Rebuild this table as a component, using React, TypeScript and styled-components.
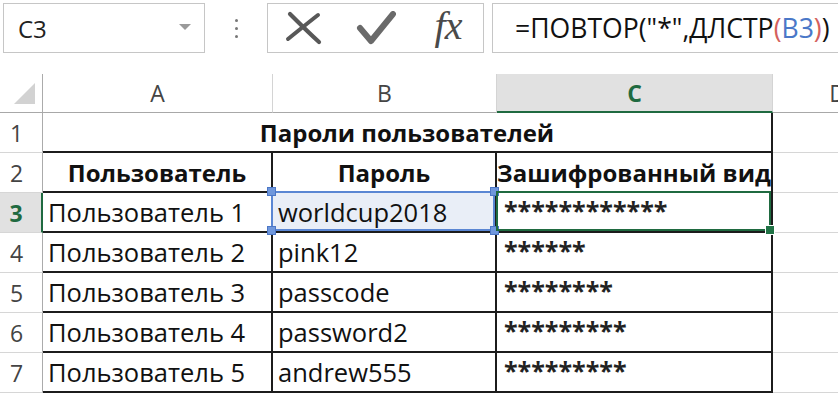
import React from 'react'
import styled, { createGlobalStyle } from 'styled-components'

const GREEN = '#1f6a40'
const DARK = '2px solid #1c1c1c'
const LIGHT = '1px solid #d6d6d6'

const GlobalStyle = createGlobalStyle`
  html, body {
    margin: 0;
    padding: 0;
    background: #fff;
    overflow: hidden;
  }
  body {
    font-family: "Open Sans", "Noto Sans", sans-serif;
    color: #111;
  }
`

const Window = styled.div`
  width: 838px;
  height: 394px;
  overflow: hidden;
`

/* ---------- formula bar ---------- */

const FormulaBar = styled.div`
  display: flex;
  align-items: stretch;
  height: 50px;
  padding: 3px 0 0 3px;
  & > * {
    flex-shrink: 0;
  }
`

const NameBox = styled.div`
  width: 202px;
  box-sizing: border-box;
  border: 1px solid #c6c6c6;
  display: flex;
  align-items: center;
  justify-content: space-between;
  padding: 0 13px 0 14px;
  font-size: 24px;
  color: #222;
`

const DropArrow = styled.span`
  width: 0;
  height: 0;
  border-left: 6px solid transparent;
  border-right: 6px solid transparent;
  border-top: 6px solid #9a9a9a;
  margin-top: -3px;
`

const Grip = styled.div`
  width: 62px;
  display: flex;
  flex-direction: column;
  align-items: center;
  justify-content: center;
  gap: 5px;
  span {
    width: 3px;
    height: 3px;
    border-radius: 50%;
    background: #777;
  }
`

const ButtonBox = styled.div`
  width: 217px;
  box-sizing: border-box;
  border: 1px solid #c6c6c6;
  display: grid;
  grid-template-columns: 72px 72px 72px;
  align-items: center;
  justify-items: center;
`

const FxLabel = styled.span`
  font-family: "Liberation Serif", "DejaVu Serif", serif;
  font-style: italic;
  font-size: 40px;
  color: #4a4a4a;
  letter-spacing: -1px;
  margin-top: -6px;
`

const FormulaInput = styled.div`
  width: 400px;
  margin-left: 8px;
  box-sizing: border-box;
  border: 1px solid #c6c6c6;
  display: flex;
  align-items: center;
  padding-left: 22px;
  font-size: 26.6px;
  color: #111;
  white-space: nowrap;
`

const Tok = styled.span<{ $c: string }>`
  color: ${p => p.$c};
`

/* ---------- sheet ---------- */

const Sheet = styled.div`
  margin-top: 21px;
  display: grid;
  grid-template-columns: 43px 230px 224px 276px 130px;
  grid-template-rows: 39px repeat(7, 40px);
`

const Corner = styled.div`
  box-sizing: border-box;
  border-right: 1px solid #ababab;
  border-bottom: 1px solid #a8a8a8;
  display: flex;
  align-items: flex-end;
  justify-content: flex-end;
  padding: 0 7px 8px 0;
`

const ColHead = styled.div<{ $active?: boolean }>`
  box-sizing: border-box;
  display: flex;
  align-items: center;
  justify-content: center;
  font-size: 23px;
  font-weight: ${p => (p.$active ? 700 : 400)};
  color: ${p => (p.$active ? GREEN : '#444')};
  background: ${p => (p.$active ? '#e1e1e1' : '#fff')};
  border-right: 1px solid #d4d4d4;
  border-bottom: ${p => (p.$active ? `2px solid ${GREEN}` : '1px solid #a8a8a8')};
`

const RowHead = styled.div<{ $active?: boolean }>`
  box-sizing: border-box;
  display: flex;
  align-items: center;
  justify-content: center;
  padding-right: 9px;
  font-size: 23px;
  font-weight: ${p => (p.$active ? 700 : 400)};
  color: ${p => (p.$active ? GREEN : '#444')};
  background: ${p => (p.$active ? '#e1e1e1' : '#fff')};
  border-right: ${p => (p.$active ? `2px solid ${GREEN}` : '1px solid #ababab')};
  border-bottom: 1px solid #d6d6d6;
`

type Line = 'dark' | 'light' | 'none'
const lines: Record<Line, string> = { dark: DARK, light: LIGHT, none: 'none' }

const Cell = styled.div<{
  $right?: Line
  $bottom?: Line
  $center?: boolean
  $bold?: boolean
  $span?: number
  $tint?: boolean
}>`
  position: relative;
  box-sizing: border-box;
  display: flex;
  align-items: center;
  justify-content: ${p => (p.$center ? 'center' : 'flex-start')};
  padding: 0 5px;
  grid-column: span ${p => p.$span ?? 1};
  font-size: ${p => (p.$bold ? '24px' : '25.5px')};
  font-weight: ${p => (p.$bold ? 700 : 400)};
  white-space: nowrap;
  background: ${p => (p.$tint ? '#e9eef7' : '#fff')};
  border-right: ${p => lines[p.$right ?? 'none']};
  border-bottom: ${p => lines[p.$bottom ?? 'none']};
`

const Mask = styled.span`
  padding-left: 2px;
  margin-top: -4px;
  font-size: 25px;
  font-weight: 700;
  color: #222;
`

/* reference frame around B3 */
const RefFrame = styled.div`
  position: absolute;
  top: -2px;
  left: -2px;
  right: 0;
  bottom: 0;
  border: 2px solid #5a86d3;
  z-index: 2;
  pointer-events: none;
`

const RefHandle = styled.span<{ $top?: boolean; $left?: boolean }>`
  position: absolute;
  width: 7px;
  height: 7px;
  background: #6f97dc;
  border: 1px solid #4c77c6;
  ${p => (p.$top ? 'top: -6px;' : 'bottom: -6px;')}
  ${p => (p.$left ? 'left: -6px;' : 'right: -6px;')}
`

/* active cell C3 */
const ActiveFrame = styled.div`
  position: absolute;
  top: -2px;
  left: -1px;
  right: 0;
  bottom: 0;
  border: 2px solid ${GREEN};
  z-index: 3;
  pointer-events: none;
`

const FillHandle = styled.span`
  position: absolute;
  right: -6px;
  bottom: -6px;
  width: 8px;
  height: 8px;
  background: #217346;
  border: 1px solid #fff;
`

const users: [string, string][] = [
  ['Пользователь 1', 'worldcup2018'],
  ['Пользователь 2', 'pink12'],
  ['Пользователь 3', 'passcode'],
  ['Пользователь 4', 'password2'],
  ['Пользователь 5', 'andrew555'],
]

const CancelIcon = () => (
  <svg width="38" height="34" viewBox="0 0 38 34">
    <path d="M5 3 C 14 12, 24 22, 34 31" stroke="#585858" strokeWidth="4.2" fill="none" strokeLinecap="round" />
    <path d="M33 4 C 24 11, 13 20, 3 28" stroke="#585858" strokeWidth="4" fill="none" strokeLinecap="round" />
  </svg>
)

const EnterIcon = () => (
  <svg width="40" height="34" viewBox="0 0 40 34">
    <path d="M4 17 L 15 30 L 37 3" stroke="#6a6a6a" strokeWidth="6" fill="none" strokeLinecap="round" strokeLinejoin="round" />
  </svg>
)

const CornerMark = () => (
  <svg width="21" height="21" viewBox="0 0 21 21">
    <polygon points="0,21 21,21 21,0" fill="#d2d2d2" />
  </svg>
)

const App: React.FC = () => {
  return (
    <Window>
      <GlobalStyle />
      <FormulaBar>
        <NameBox>
          <span>C3</span>
          <DropArrow />
        </NameBox>
        <Grip>
          <span />
          <span />
          <span />
        </Grip>
        <ButtonBox>
          <CancelIcon />
          <EnterIcon />
          <FxLabel>fx</FxLabel>
        </ButtonBox>
        <FormulaInput>
          =ПОВТОР("*",ДЛСТР<Tok $c="#d4605c">(</Tok>
          <Tok $c="#4a78c8">B3</Tok>
          <Tok $c="#d4605c">)</Tok>)
        </FormulaInput>
      </FormulaBar>

      <Sheet>
        <Corner>
          <CornerMark />
        </Corner>
        <ColHead>A</ColHead>
        <ColHead>B</ColHead>
        <ColHead $active>C</ColHead>
        <ColHead>D</ColHead>

        <RowHead>1</RowHead>
        <Cell $span={3} $center $bold $right="dark" $bottom="dark">
          Пароли пользователей
        </Cell>
        <Cell $bottom="light" />

        <RowHead>2</RowHead>
        <Cell $center $bold $right="dark" $bottom="dark">Пользователь</Cell>
        <Cell $center $bold $right="dark" $bottom="dark">Пароль</Cell>
        <Cell $center $bold $right="dark" $bottom="dark">Зашифрованный вид</Cell>
        <Cell $bottom="light" />

        {users.map(([name, pwd], i) => {
          const first = i === 0
          return (
            <React.Fragment key={name}>
              <RowHead $active={first}>{i + 3}</RowHead>
              <Cell $right="dark" $bottom="dark">{name}</Cell>
              <Cell $right="dark" $bottom="dark" $tint={first}>
                {pwd}
                {first && (
                  <RefFrame>
                    <RefHandle $top $left />
                    <RefHandle $top />
                    <RefHandle $left />
                    <RefHandle />
                  </RefFrame>
                )}
              </Cell>
              <Cell $right="dark" $bottom="dark">
                <Mask>{'*'.repeat(pwd.length)}</Mask>
                {first && (
                  <ActiveFrame>
                    <FillHandle />
                  </ActiveFrame>
                )}
              </Cell>
              <Cell $bottom="light" />
            </React.Fragment>
          )
        })}
      </Sheet>
    </Window>
  )
}

export default App
